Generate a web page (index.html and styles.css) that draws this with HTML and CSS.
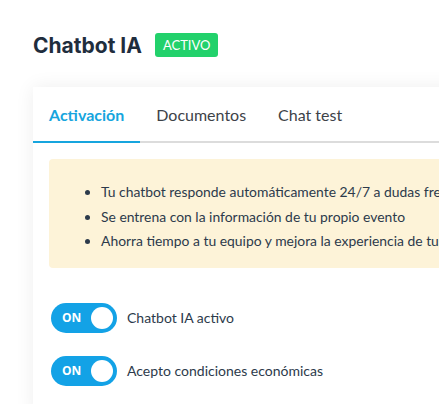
FILE: index.html
```html
<!DOCTYPE html>
<html>
<head>
    <meta charset="utf-8">
    <meta name="viewport" content="width=device-width, initial-scale=1">
    <title>Chatbot IA</title>
    <link rel="stylesheet" href="styles.css">
</head>
<body>

    <div class="header">
        <h2>Chatbot IA</h2>
        <span class="badge">ACTIVO</span>
    </div>

    <div class="card">
        <ul class="tabs">
            <li><a class="tab selected" href="#">Activación</a></li>
            <li><a class="tab" href="#">Documentos</a></li>
            <li><a class="tab" href="#">Chat test</a></li>
        </ul>

        <div class="card-body">
            <div class="info">
                <ul>
                    <li>Tu chatbot responde automáticamente 24/7 a dudas frecuentes de tus asistentes</li>
                    <li>Se entrena con la información de tu propio evento</li>
                    <li>Ahorra tiempo a tu equipo y mejora la experiencia de tus asistentes</li>
                </ul>
            </div>

            <label class="option">
                <span class="switch"><span class="switch-text">ON</span><span class="knob"></span></span>
                Chatbot IA activo
            </label>
            <label class="option">
                <span class="switch"><span class="switch-text">ON</span><span class="knob"></span></span>
                Acepto condiciones económicas
            </label>
        </div>
    </div>

</body>
</html>
```

FILE: styles.css
```css
body, html {
    margin: 0;
    padding: 0;
    background-color: #fff;
    font-family: Lato, "Open Sans", sans-serif;
    color: #2c3a4b;
    overflow: hidden;
}

body {
    padding: 33px 0 0 33px;
}

.header {
    display: flex;
    align-items: center;
    gap: 13px;
    height: 24px;
}

.header h2 {
    margin: 0;
    font-family: Inter, "Liberation Sans", sans-serif;
    font-size: 21px;
    font-weight: 700;
    color: #1f2d3d;
}

.badge {
    background-color: #22d16b;
    color: white;
    font-size: 13px;
    line-height: 24px;
    padding: 0 8px;
    border-radius: 3px;
}

.card {
    margin-top: 30px;
    width: 640px;
    background: white;
    box-shadow: 0 0 18px rgba(0, 0, 0, 0.07);
}

.tabs {
    list-style: none;
    margin: 0;
    padding: 0;
    display: flex;
    border-bottom: 2px solid #dcdcdc;
}

.tab {
    display: block;
    padding: 1px 16px 0;
    line-height: 53px;
    font-size: 16px;
    color: #3d4248;
    text-decoration: none;
    margin-bottom: -2px;
    border-bottom: 2px solid transparent;
}

.tab.selected {
    color: #16a5de;
    font-weight: 700;
    border-bottom-color: #16a5de;
}

.card-body {
    padding: 16px 16px 30px;
}

.info {
    background-color: #fdf3d8;
    border-radius: 4px;
    padding: 21px 16px 14px;
    font-size: 13.9px;
    white-space: nowrap;
}

.info ul {
    margin: 0;
    padding-left: 36px;
}

.info li {
    line-height: 24.5px;
}

.option {
    display: flex;
    align-items: center;
    gap: 10px;
    font-size: 14px;
    margin-top: 23px;
    margin-left: 2px;
}

.info + .option {
    margin-top: 35px;
}

.switch {
    display: flex;
    align-items: center;
    justify-content: space-between;
    width: 66px;
    height: 30px;
    box-sizing: border-box;
    padding: 0 4px 0 11px;
    border-radius: 15px;
    background-color: #13a2e6;
}

.switch-text {
    color: white;
    font-family: "Open Sans", sans-serif;
    font-weight: 700;
    font-size: 12px;
}

.knob {
    width: 22px;
    height: 22px;
    border-radius: 50%;
    background: white;
}
```
